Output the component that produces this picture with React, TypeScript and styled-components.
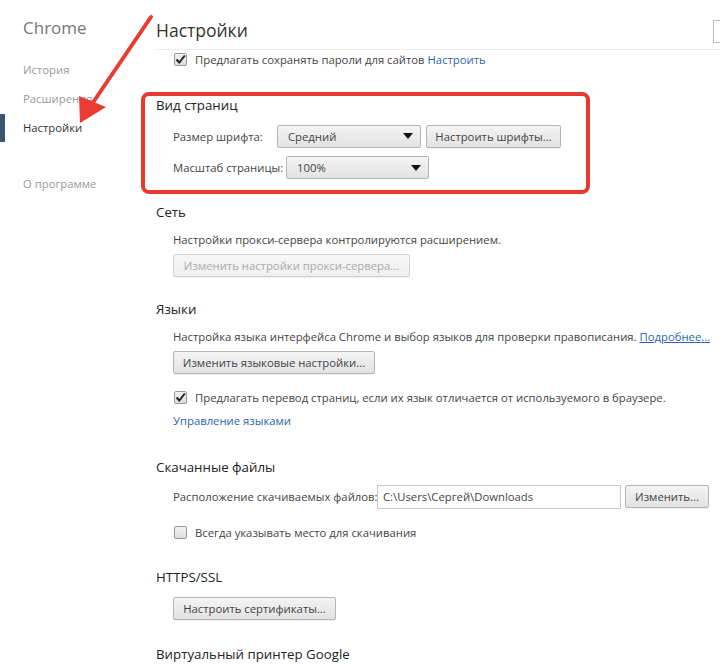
import React from "react";
import styled, { createGlobalStyle } from "styled-components";

const GlobalStyle = createGlobalStyle`
  html, body {
    margin: 0;
    padding: 0;
    background: #fff;
  }
  body {
    font-family: "Open Sans", "Noto Sans", Arial, sans-serif;
    font-size: 11.3px;
    color: #333;
  }
`;

const Page = styled.div`
  position: relative;
  display: flex;
  width: 720px;
  height: 665px;
  overflow: hidden;
`;

const Sidebar = styled.nav`
  width: 156px;
  flex-shrink: 0;
  display: flex;
  flex-direction: column;
`;

const Brand = styled.div`
  height: 38px;
  padding: 17px 0 0 23px;
  box-sizing: border-box;
  line-height: 22px;
  font-size: 17px;
  color: #777;
  font-weight: 400;
`;

const NavItem = styled.div<{ $active?: boolean; $mt?: number }>`
  position: relative;
  height: 28px;
  line-height: 28px;
  padding-left: 23px;
  margin-top: ${(p) => p.$mt ?? 0}px;
  color: ${(p) => (p.$active ? "#333" : "#999")};
  &::before {
    content: "";
    display: ${(p) => (p.$active ? "block" : "none")};
    position: absolute;
    left: 0;
    top: 0;
    width: 5px;
    height: 28px;
    background: #3e5470;
  }
`;

const Main = styled.main`
  flex: 1;
  display: flex;
  flex-direction: column;
  min-width: 0;
`;

const Header = styled.header`
  height: 50px;
  border-bottom: 1px solid #eee;
  display: flex;
  align-items: flex-start;
  justify-content: space-between;
  box-sizing: border-box;
`;

const Title = styled.h1`
  margin: 18px 0 0;
  font-size: 17.5px;
  line-height: 24px;
  font-weight: 400;
  color: #333;
`;

const Search = styled.div`
  margin-top: 20px;
  width: 7px;
  height: 23px;
  border: 1px solid #bbb;
  border-right: none;
  box-sizing: border-box;
`;

const Row = styled.div<{ $mt?: number; $h?: number; $indent?: boolean }>`
  display: flex;
  align-items: center;
  gap: 8px;
  margin-top: ${(p) => p.$mt ?? 0}px;
  height: ${(p) => p.$h ?? 18}px;
  padding-left: ${(p) => (p.$indent ? 17 : 0)}px;
  white-space: nowrap;
`;

const SectionTitle = styled.h2<{ $mt?: number }>`
  margin: ${(p) => p.$mt ?? 0}px 0 0;
  height: 18px;
  line-height: 18px;
  font-size: 13.3px;
  font-weight: 400;
  color: #222;
`;

const Highlight = styled.section`
  margin: 24px 0 0 -15px;
  width: 449px;
  height: 102px;
  box-sizing: border-box;
  border: 4px solid #e8392f;
  border-radius: 8px;
  padding: 0 0 0 11px;
  display: flex;
  flex-direction: column;
`;

const Label = styled.span<{ $w?: number }>`
  color: #444;
  ${(p) => (p.$w ? `width: ${p.$w}px; flex-shrink: 0;` : "")}
`;

const Link = styled.a<{ $underline?: boolean }>`
  color: #2a66b0;
  text-decoration: ${(p) => (p.$underline ? "underline" : "none")};
  cursor: pointer;
`;

const Button = styled.button<{ $w: number; $disabled?: boolean }>`
  width: ${(p) => p.$w}px;
  flex-shrink: 0;
  height: 23px;
  padding: 0;
  font-family: inherit;
  font-size: 11.3px;
  white-space: nowrap;
  color: ${(p) => (p.$disabled ? "#aaa" : "#444")};
  border: 1px solid ${(p) => (p.$disabled ? "#d2d2d2" : "#b5b5b5")};
  border-radius: 2px;
  background: ${(p) =>
    p.$disabled
      ? "linear-gradient(#f7f7f7, #efefef)"
      : "linear-gradient(#f4f4f4, #e2e2e2)"};
  box-shadow: 0 1px 0 rgba(0, 0, 0, 0.06);
  text-align: center;
`;

const Select = styled.div<{ $w: number }>`
  width: ${(p) => p.$w}px;
  flex-shrink: 0;
  height: 23px;
  box-sizing: border-box;
  display: flex;
  align-items: center;
  justify-content: space-between;
  padding: 0 7px 0 10px;
  border: 1px solid #b5b5b5;
  border-radius: 2px;
  background: linear-gradient(#f4f4f4, #e2e2e2);
  color: #444;
`;

const Caret = styled.span`
  width: 0;
  height: 0;
  border-left: 5px solid transparent;
  border-right: 5px solid transparent;
  border-top: 6px solid #111;
`;

const TextInput = styled.div`
  width: 244px;
  flex-shrink: 0;
  height: 24px;
  box-sizing: border-box;
  border: 1px solid #c8c8c8;
  padding: 0 5px;
  line-height: 22px;
  color: #444;
`;

const Box = styled.span`
  width: 13px;
  height: 13px;
  box-sizing: border-box;
  border: 1px solid #9a9a9a;
  border-radius: 2px;
  background: linear-gradient(#f2f2f2, #dcdcdc);
  display: inline-flex;
  align-items: center;
  justify-content: center;
  flex-shrink: 0;
  margin-left: 1px;
`;

const Body = styled.div`
  padding-left: 17px;
  display: flex;
  flex-direction: column;
`;

const Arrow = styled.svg`
  position: absolute;
  left: 0;
  top: 0;
  pointer-events: none;
`;

const Check = ({ checked }: { checked?: boolean }) => (
  <Box>
    {checked && (
      <svg width="11" height="11" viewBox="0 0 11 11">
        <path d="M1.5 5.5 L4.3 8.5 L9.8 1.5" fill="none" stroke="#222" strokeWidth="2" />
      </svg>
    )}
  </Box>
);

export default function App() {
  return (
    <Page>
      <GlobalStyle />
      <Sidebar>
        <Brand>Chrome</Brand>
        <NavItem $mt={18}>История</NavItem>
        <NavItem $mt={1}>Расширения</NavItem>
        <NavItem $active $mt={1}>Настройки</NavItem>
        <NavItem $mt={28}>О программе</NavItem>
      </Sidebar>
      <Main>
        <Header>
          <Title>Настройки</Title>
          <Search />
        </Header>
        <Row $indent $h={18}>
          <Check checked />
          <Label>
            Предлагать сохранять пароли для сайтов <Link>Настроить</Link>
          </Label>
        </Row>

        <Highlight>
          <SectionTitle>Вид страниц</SectionTitle>
          <Row $indent $mt={11} $h={22} style={{ gap: 0 }}>
            <Label $w={104}>Размер шрифта:</Label>
            <Select $w={144}>
              Средний <Caret />
            </Select>
            <Button $w={135} style={{ marginLeft: 5 }}>
              Настроить шрифты...
            </Button>
          </Row>
          <Row $indent $mt={9} $h={23} style={{ gap: 0 }}>
            <Label $w={113}>Масштаб страницы:</Label>
            <Select $w={143}>
              100% <Caret />
            </Select>
          </Row>
        </Highlight>

        <SectionTitle $mt={9}>Сеть</SectionTitle>
        <Body>
          <Row $mt={9}>
            <Label>Настройки прокси-сервера контролируются расширением.</Label>
          </Row>
          <Row $mt={6} $h={23}>
            <Button $w={237} $disabled>
              Изменить настройки прокси-сервера...
            </Button>
          </Row>
        </Body>

        <SectionTitle $mt={23}>Языки</SectionTitle>
        <Body>
          <Row $mt={9}>
            <Label>
              Настройка языка интерфейса Chrome и выбор языков для проверки правописания.{" "}
              <Link $underline>Подробнее...</Link>
            </Label>
          </Row>
          <Row $mt={6} $h={23}>
            <Button $w={202}>Изменить языковые настройки...</Button>
          </Row>
          <Row $mt={14}>
            <Check checked />
            <Label>Предлагать перевод страниц, если их язык отличается от используемого в браузере.</Label>
          </Row>
          <Row $mt={5}>
            <Link>Управление языками</Link>
          </Row>
        </Body>

        <SectionTitle $mt={29}>Скачанные файлы</SectionTitle>
        <Body>
          <Row $mt={9} $h={23} style={{ gap: 0 }}>
            <Label $w={204}>Расположение скачиваемых файлов:</Label>
            <TextInput>C:\Users\Сергей\Downloads</TextInput>
            <Button $w={84} style={{ marginLeft: 4 }}>
              Изменить...
            </Button>
          </Row>
          <Row $mt={15}>
            <Check />
            <Label>Всегда указывать место для скачивания</Label>
          </Row>
        </Body>

        <SectionTitle $mt={27}>HTTPS/SSL</SectionTitle>
        <Body>
          <Row $mt={11} $h={23}>
            <Button $w={163}>Настроить сертификаты...</Button>
          </Row>
        </Body>

        <SectionTitle $mt={25}>Виртуальный принтер Google</SectionTitle>
      </Main>

      <Arrow width="720" height="665" viewBox="0 0 720 665">
        <line x1="151" y1="17" x2="92" y2="104" stroke="#ea3b32" strokeWidth="4" strokeLinecap="round" />
        <polygon points="80,123 79,96 106,107" fill="#ea3b32" />
      </Arrow>
    </Page>
  );
}
